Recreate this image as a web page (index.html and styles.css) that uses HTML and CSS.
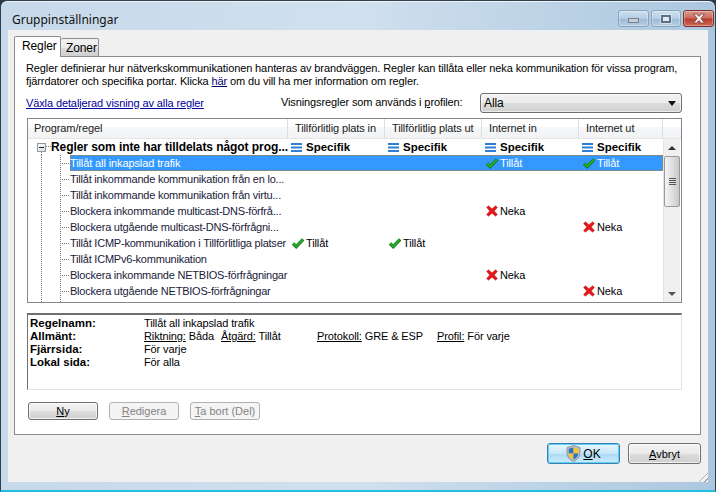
FILE: index.html
```html
<!DOCTYPE html>
<html lang="sv">
<head>
    <meta charset="UTF-8" />
    <title>Gruppinställningar</title>
    <link rel="stylesheet" href="styles.css">
</head>
<body>
    <svg class="icon-defs" width="0" height="0">
        <symbol id="i-check" viewBox="0 0 14 12">
            <path d="M2 6.5 L5.2 9.6 L12.2 2.4" fill="none" stroke="#127a1c" stroke-width="3.4" stroke-linejoin="miter"/>
            <path d="M2.2 6.5 L5.2 9.4 L12 2.6" fill="none" stroke="#27ab30" stroke-width="2"/>
        </symbol>
        <symbol id="i-cross" viewBox="0 0 13 13">
            <path d="M2.6 0.8 L6.5 4 L10.4 0.8 L12.4 2.6 L9 6.5 L12.4 10.4 L10.4 12.2 L6.5 9 L2.6 12.2 L0.6 10.4 L4 6.5 L0.6 2.6 Z" fill="#e3161c" stroke="#c8242a" stroke-width="0.5"/>
        </symbol>
        <symbol id="i-spec" viewBox="0 0 11 9">
            <rect x="0" y="0" width="11" height="2" fill="#2f7fd6"/>
            <rect x="0" y="3.5" width="11" height="2" fill="#2f7fd6"/>
            <rect x="0" y="7" width="11" height="2" fill="#2f7fd6"/>
        </symbol>
    </svg>

    <div class="window">
        <div class="titlebar">
            <span class="title">Gruppinställningar</span>
            <div class="caption-buttons">
                <div class="cap cap-min"><span></span></div>
                <div class="cap cap-max"><span></span></div>
                <div class="cap cap-close">
                    <svg width="16" height="11" viewBox="0 0 16 11"><path d="M2.5 1 L5.5 1 L8 3.4 L10.5 1 L13.5 1 L9.8 5.5 L13.5 10 L10.5 10 L8 7.6 L5.5 10 L2.5 10 L6.2 5.5 Z" fill="#f4f4f4" stroke="#7d3a35" stroke-width="0.8"/></svg>
                </div>
            </div>
        </div>

        <div class="client">
            <div class="tabs">
                <div class="tab active">Regler</div>
                <div class="tab">Zoner</div>
            </div>

            <div class="panel">
                <p class="intro">Regler definierar hur nätverkskommunikationen hanteras av brandväggen. Regler kan tillåta eller neka kommunikation för vissa program, fjärrdatorer och specifika portar. Klicka <a class="link-dark">här</a> om du vill ha mer information om regler.</p>

                <div class="toolbar">
                    <a class="link">Växla detaljerad visning av alla regler</a>
                    <span class="profile-label">Visningsregler som används i <u>p</u>rofilen:</span>
                    <div class="combo">
                        <span>Alla</span>
                        <i class="combo-arrow"></i>
                    </div>
                </div>

                <div class="list">
                    <div class="list-head">
                        <div class="hcell first">Program/regel</div>
                        <div class="hcell">Tillförlitlig plats in</div>
                        <div class="hcell">Tillförlitlig plats ut</div>
                        <div class="hcell">Internet in</div>
                        <div class="hcell last">Internet ut</div>
                        <div class="hcell filler"></div>
                    </div>
                    <div class="list-body">
                        <div class="rows">
                            <div class="row group">
                                <div class="tree tree-group"><i class="expander"></i></div>
                                <div class="name">Regler som inte har tilldelats något prog...</div>
                                <div class="cell"><svg class="ic-spec"><use href="#i-spec"/></svg>Specifik</div>
                                <div class="cell"><svg class="ic-spec"><use href="#i-spec"/></svg>Specifik</div>
                                <div class="cell"><svg class="ic-spec"><use href="#i-spec"/></svg>Specifik</div>
                                <div class="cell c-last"><svg class="ic-spec"><use href="#i-spec"/></svg>Specifik</div>
                            </div>
                            <div class="row">
                                <div class="tree"></div>
                                <div class="sel-wrap">
                                    <div class="name">Tillåt all inkapslad trafik</div>
                                    <div class="cell"></div>
                                    <div class="cell"></div>
                                    <div class="cell"><svg class="ic"><use href="#i-check"/></svg>Tillåt</div>
                                    <div class="cell c-last"><svg class="ic"><use href="#i-check"/></svg>Tillåt</div>
                                </div>
                            </div>
                            <div class="row">
                                <div class="tree"></div>
                                <div class="name">Tillåt inkommande kommunikation från en lo...</div>
                            </div>
                            <div class="row">
                                <div class="tree"></div>
                                <div class="name">Tillåt inkommande kommunikation från virtu...</div>
                            </div>
                            <div class="row">
                                <div class="tree"></div>
                                <div class="name">Blockera inkommande multicast-DNS-förfrå...</div>
                                <div class="cell"></div>
                                <div class="cell"></div>
                                <div class="cell"><svg class="ic"><use href="#i-cross"/></svg>Neka</div>
                            </div>
                            <div class="row">
                                <div class="tree"></div>
                                <div class="name">Blockera utgående multicast-DNS-förfrågni...</div>
                                <div class="cell"></div>
                                <div class="cell"></div>
                                <div class="cell"></div>
                                <div class="cell c-last"><svg class="ic"><use href="#i-cross"/></svg>Neka</div>
                            </div>
                            <div class="row">
                                <div class="tree"></div>
                                <div class="name">Tillåt ICMP-kommunikation i Tillförlitliga platser</div>
                                <div class="cell"><svg class="ic"><use href="#i-check"/></svg>Tillåt</div>
                                <div class="cell"><svg class="ic"><use href="#i-check"/></svg>Tillåt</div>
                            </div>
                            <div class="row">
                                <div class="tree"></div>
                                <div class="name">Tillåt ICMPv6-kommunikation</div>
                            </div>
                            <div class="row">
                                <div class="tree"></div>
                                <div class="name">Blockera inkommande NETBIOS-förfrågningar</div>
                                <div class="cell"></div>
                                <div class="cell"></div>
                                <div class="cell"><svg class="ic"><use href="#i-cross"/></svg>Neka</div>
                            </div>
                            <div class="row">
                                <div class="tree"></div>
                                <div class="name">Blockera utgående NETBIOS-förfrågningar</div>
                                <div class="cell"></div>
                                <div class="cell"></div>
                                <div class="cell"></div>
                                <div class="cell c-last"><svg class="ic"><use href="#i-cross"/></svg>Neka</div>
                            </div>
                            <div class="row">
                                <div class="tree"></div>
                                <div class="name">Blockera inkommande SMB-förfrågningar</div>
                            </div>
                        </div>
                        <div class="scrollbar">
                            <div class="sb-btn"><i class="sb-up"></i></div>
                            <div class="sb-thumb"><span></span><span></span><span></span><span></span></div>
                            <div class="sb-track"></div>
                            <div class="sb-btn"><i class="sb-down"></i></div>
                        </div>
                    </div>
                </div>

                <div class="details">
                    <b>Regelnamn:</b>
                    <div>Tillåt all inkapslad trafik</div>
                    <b>Allmänt:</b>
                    <div class="props">
                        <span class="p1"><u>Riktning:</u> Båda</span>
                        <span class="p2"><u>Åtgärd:</u> Tillåt</span>
                        <span class="p3"><u>Protokoll:</u> GRE &amp; ESP</span>
                        <span><u>Profil:</u> För varje</span>
                    </div>
                    <b>Fjärrsida:</b>
                    <div>För varje</div>
                    <b>Lokal sida:</b>
                    <div>För alla</div>
                </div>

                <div class="actions">
                    <button class="btn btn-small"><u>N</u>y</button>
                    <button class="btn btn-small" disabled><u>R</u>edigera</button>
                    <button class="btn btn-small" disabled><u>T</u>a bort (Del)</button>
                </div>
            </div>

            <div class="footer">
                <button class="btn btn-main btn-default">
                    <svg class="shield" width="15" height="17" viewBox="0 0 15 17">
                        <path d="M7.5 0.5 L14 2.5 L14 8 C14 12 11 15 7.5 16.5 C4 15 1 12 1 8 L1 2.5 Z" fill="#b9bdc2" stroke="#7f8a96" stroke-width="0.8"/>
                        <path d="M7.5 2.5 L7.5 8.5 L2.8 8.5 L2.8 3.8 Z" fill="#2d6fc9"/>
                        <path d="M7.5 2.5 L12.2 3.8 L12.2 8.5 L7.5 8.5 Z" fill="#f4c724"/>
                        <path d="M2.8 8.5 L7.5 8.5 L7.5 14.6 C5 13.4 3 11.4 2.8 8.5 Z" fill="#f4c724"/>
                        <path d="M7.5 8.5 L12.2 8.5 C12 11.4 10 13.4 7.5 14.6 Z" fill="#2d6fc9"/>
                    </svg>
                    <span><u>O</u>K</span>
                </button>
                <button class="btn btn-main"><u>A</u>vbryt</button>
                <div class="grip"></div>
            </div>
        </div>
    </div>
</body>
</html>
```

FILE: styles.css
```css
* {
    margin: 0;
    padding: 0;
    box-sizing: border-box;
}

html, body {
    width: 716px;
    height: 492px;
    overflow: hidden;
    background: #2a3a44;
}

body {
    font-family: "Liberation Sans", Arial, sans-serif;
    font-size: 11px;
    letter-spacing: -0.11px;
    color: #000;
}

.icon-defs {
    position: absolute;
}

.window {
    width: 716px;
    height: 492px;
    display: flex;
    flex-direction: column;
    padding: 0 8px 8px;
    border: 1px solid #30414c;
    border-bottom: 2px solid #1fc0e0;
    border-radius: 7px 7px 0 0;
    background: linear-gradient(90deg, #c6d9ea, #d0e0ee 50%, #abc7df 100%);
    box-shadow: inset 0 1px 0 #eef4fa;
}

/* title bar */
.titlebar {
    height: 29px;
    margin: 0 -1px;
    display: flex;
    align-items: flex-start;
    justify-content: space-between;
}

.title {
    font-family: "Noto Sans", sans-serif;
    font-size: 12px;
    letter-spacing: 0;
    line-height: 17px;
    margin: 10px 0 0 4px;
    color: #101010;
}

.caption-buttons {
    display: flex;
    gap: 2px;
    margin: 9px -6px 0 0;
}

.cap {
    width: 31px;
    height: 17px;
    border: 1px solid #8ba3b9;
    border-radius: 3px;
    background: linear-gradient(#cfe0ef 0%, #b5cde3 50%, #9db9d3 51%, #b4cfe5 100%);
    display: flex;
    align-items: center;
    justify-content: center;
    box-shadow: inset 0 0 0 1px rgba(255,255,255,0.3);
}

.cap-max {
    width: 30px;
}

.cap-min span {
    width: 11px;
    height: 5px;
    margin-top: 4px;
    background: #c8cdd2;
    border: 1px solid #6f8194;
}

.cap-max span {
    width: 10px;
    height: 8px;
    background: #dfe9f2;
    border: 2px solid #5d7085;
    box-shadow: 0 0 0 1px rgba(255,255,255,0.4);
}

.cap-close {
    border-color: #7c2f2a;
    background: linear-gradient(#d89a8f 0%, #c96a5c 48%, #b93a2c 52%, #cf6b58 100%);
}

/* client area */
.client {
    flex: 1;
    background: #f0f0f0;
    padding: 7px 0 0 6px;
    display: flex;
    flex-direction: column;
    margin: 0 -1px 0 -1px;
}

.tabs {
    display: flex;
    height: 20px;
    align-items: flex-end;
    position: relative;
    z-index: 1;
    margin-bottom: -1px;
}

.tab {
    height: 18px;
    line-height: 18px;
    padding: 0 5px;
    border: 1px solid #898c95;
    border-bottom: none;
    border-left: none;
    border-radius: 2px 2px 0 0;
    background: linear-gradient(#f2f2f2 0%, #ebebeb 50%, #dddddd 51%, #cfcfcf 100%);
    font-size: 12px;
}

.tab.active {
    height: 21px;
    line-height: 19px;
    padding: 0 7px;
    width: 47px;
    border-left: 1px solid #898c95;
    background: #fff;
}

.tab:not(.active) {
    width: 38px;
    margin-bottom: 1px;
}

.panel {
    width: 687px;
    height: 379px;
    background: #fff;
    border: 1px solid #898c95;
    padding: 5px 18px 0 12px;
    display: flex;
    flex-direction: column;
}

.intro {
    line-height: 13px;
    margin-left: -1px;
    height: 26px;
    width: 660px;
}

.link-dark {
    color: #00006e;
    text-decoration: underline;
}

.toolbar {
    display: grid;
    grid-template-columns: 255px 199px 202px;
    align-items: center;
    height: 20px;
    margin: 5px 0 0 -1px;
}

.link {
    color: #00009c;
    text-decoration: underline;
}

.profile-label {
    padding-bottom: 2px;
}

.combo {
    height: 20px;
    border: 1px solid #707070;
    border-radius: 3px;
    background: linear-gradient(#f2f2f2 0%, #ebebeb 50%, #dddddd 51%, #cfcfcf 100%);
    display: flex;
    align-items: center;
    justify-content: space-between;
    padding: 0 5px 0 3px;
    font-size: 12px;
    box-shadow: inset 0 0 0 1px rgba(255,255,255,0.6);
}

.combo-arrow {
    width: 0;
    height: 0;
    border-left: 4.5px solid transparent;
    border-right: 4.5px solid transparent;
    border-top: 5px solid #111;
}

/* rule list */
.list {
    margin-top: 5px;
    height: 185px;
    width: 655px;
    border: 1px solid #828790;
    flex-shrink: 0;
}

.list-head {
    display: flex;
    height: 20px;
    background: linear-gradient(#fff 0%, #fff 40%, #f6f7f8 41%, #f2f3f4 100%);
    border-bottom: 1px solid #e5e5e5;
}

.hcell {
    width: 97px;
    padding: 2px 0 0 7px;
    border-right: 1px solid #dde0e3;
    line-height: 14px;
    white-space: nowrap;
    overflow: hidden;
    color: #222;
}

.hcell.first {
    width: 260px;
    padding-left: 6px;
}

.hcell.last {
    width: 84px;
}

.hcell.filler {
    flex: 1;
    border-right: none;
}

.list-body {
    display: flex;
    height: 163px;
    overflow: hidden;
}

.rows {
    width: 635px;
    overflow: hidden;
}

.row {
    display: flex;
    height: 16px;
    line-height: 16px;
    white-space: nowrap;
    color: #1a1a3a;
}

.tree {
    width: 42px;
    flex-shrink: 0;
    background:
        repeating-linear-gradient(to bottom, #777 0 1px, transparent 1px 2px) 13px 0 / 1px 100% no-repeat,
        repeating-linear-gradient(to bottom, #777 0 1px, transparent 1px 2px) 32px 0 / 1px 100% no-repeat,
        repeating-linear-gradient(to right, #777 0 1px, transparent 1px 2px) 32px 8px / 10px 1px no-repeat;
}

.tree-group {
    width: 23px;
    position: relative;
    background:
        repeating-linear-gradient(to bottom, #777 0 1px, transparent 1px 2px) 13px 11px / 1px 5px no-repeat,
        repeating-linear-gradient(to right, #777 0 1px, transparent 1px 2px) 18px 7px / 5px 1px no-repeat;
}

.expander {
    position: absolute;
    left: 9px;
    top: 4px;
    width: 9px;
    height: 9px;
    border: 1px solid #8f9aa5;
    background: linear-gradient(135deg, #fff, #d5dbe2);
}

.expander::after {
    content: '';
    position: absolute;
    left: 1px;
    top: 3px;
    width: 5px;
    height: 1px;
    background: #222;
}

.name {
    width: 218px;
    flex-shrink: 0;
    overflow: hidden;
    letter-spacing: -0.22px;
}

.group .name {
    width: 237px;
    font-weight: bold;
    font-size: 12px;
    letter-spacing: -0.07px;
    color: #000;
}

.cell {
    width: 97px;
    flex-shrink: 0;
    display: flex;
    align-items: center;
    padding-left: 3px;
    color: #000;
}

.c-last {
    width: 84px;
}

.group .cell {
    font-weight: bold;
    font-size: 11.5px;
    letter-spacing: 0;
}

.ic, .ic-spec {
    width: 14px;
    height: 12px;
    margin-right: 1px;
    flex-shrink: 0;
}

.ic-spec {
    width: 11px;
    height: 9px;
    margin-right: 4px;
}

/* selected row */
.sel-wrap {
    display: flex;
    height: 16px;
    width: 593px;
    background: #3399ff;
    outline: 1px dotted #c47a1f;
    outline-offset: -1px;
}

.sel-wrap .name, .sel-wrap .cell {
    color: #fff;
}

.sel-wrap .name {
    letter-spacing: -0.11px;
}

/* scrollbar */
.scrollbar {
    width: 17px;
    height: 163px;
    display: flex;
    flex-direction: column;
    background: #f0f0f0;
    border-left: 1px solid #e3e3e3;
}

.sb-btn {
    height: 17px;
    display: flex;
    align-items: center;
    justify-content: center;
}

.sb-up {
    border-left: 4px solid transparent;
    border-right: 4px solid transparent;
    border-bottom: 4px solid #333;
}

.sb-down {
    border-left: 4px solid transparent;
    border-right: 4px solid transparent;
    border-top: 4px solid #555;
}

.sb-thumb {
    height: 51px;
    border: 1px solid #9a9a9a;
    border-radius: 2px;
    background: linear-gradient(90deg, #f4f4f4, #e0e0e0 50%, #c9c9c9);
    display: flex;
    flex-direction: column;
    align-items: center;
    justify-content: center;
    gap: 1px;
}

.sb-thumb span {
    width: 7px;
    height: 1px;
    background: #555;
}

.sb-track {
    flex: 1;
}

/* details pane */
.details {
    margin-top: 10px;
    width: 655px;
    height: 77px;
    flex-shrink: 0;
    border: 1px solid #e3e3e3;
    border-top: 2px solid #6f6f6f;
    border-left: 1px solid #6f6f6f;
    padding: 2px 0 0 2px;
    display: grid;
    grid-template-columns: 114px 1fr;
    grid-auto-rows: 13px;
    line-height: 13px;
}

.details b {
    font-size: 11.5px;
    letter-spacing: 0;
}

.props {
    display: flex;
    white-space: nowrap;
}

.p1 { width: 77px; }
.p2 { width: 96px; }
.p3 { width: 120px; }

/* buttons */
.actions {
    display: flex;
    gap: 11px;
    margin: 12px 0 0 1px;
}

.btn {
    font: inherit;
    border: 1px solid #707070;
    border-radius: 3px;
    background: linear-gradient(#f2f2f2 0%, #ebebeb 50%, #dddddd 51%, #cfcfcf 100%);
    box-shadow: inset 0 0 0 1px rgba(255,255,255,0.7);
    color: #000;
}

.btn-small {
    width: 70px;
    height: 18px;
    line-height: 14px;
}

.btn:disabled {
    border-color: #adb2b5;
    background: #f4f4f4;
    color: #838383;
    box-shadow: none;
}

.footer {
    flex: 1;
    display: flex;
    justify-content: flex-end;
    gap: 8px;
    padding: 8px 7px 0 0;
    position: relative;
}

.btn-main {
    width: 73px;
    height: 21px;
}

.btn-default {
    display: flex;
    align-items: center;
    justify-content: center;
    gap: 2px;
    font-size: 12px;
    border-color: #3c7fb1;
    background: linear-gradient(#e8f6fd 0%, #c7e6f8 50%, #a9d9f4 51%, #cfecfb 100%);
    box-shadow: inset 0 0 0 1px #5fd0f5;
}

.shield {
    margin-left: 0;
}

.grip {
    position: absolute;
    right: 0;
    bottom: 0;
    width: 12px;
    height: 12px;
    background: repeating-linear-gradient(135deg, transparent 0 2px, #a9a9a9 2px 3px, #fff 3px 4px);
    clip-path: polygon(100% 0, 100% 100%, 0 100%);
}
```
